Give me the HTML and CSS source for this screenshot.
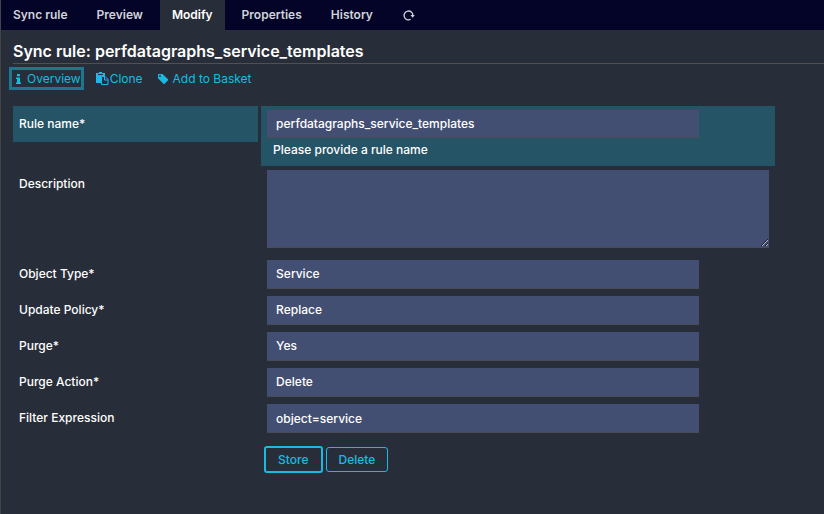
FILE: index.html
```html
<!DOCTYPE html>
<html lang="en">
<head>
<meta charset="utf-8">
<meta name="viewport" content="width=device-width, initial-scale=1">
<title>Sync rule: perfdatagraphs_service_templates</title>
<link rel="stylesheet" href="styles.css">
</head>
<body>
<nav class="tabs">
  <a class="tab" href="#">Sync rule</a>
  <a class="tab" href="#">Preview</a>
  <a class="tab active" href="#" aria-current="page">Modify</a>
  <a class="tab" href="#">Properties</a>
  <a class="tab" href="#">History</a>
  <a class="tab" href="#" aria-label="Reload"><svg class="reload" viewBox="0 0 13 13"><path d="M8.600 10.300A4.400 4.400 0 1 1 10.900 6.500" fill="none" stroke="currentColor" stroke-width="1.300"/><path d="M8.400 6h4.400L10.700 8.700z" fill="currentColor"/></svg></a>
</nav>
<main class="page">
  <h1 class="title">Sync rule: perfdatagraphs_service_templates</h1>
  <div class="actions">
    <a class="action focused" href="#"><svg class="icon" viewBox="0 0 12 12"><path d="M4 1h3v2.200h-3zM3 4.500h4V9.500h1V11h-5V9.500h1V6h-1z" fill="currentColor"/></svg>Overview</a>
    <a class="action clone" href="#"><svg class="icon wide" viewBox="0 0 13 13"><path d="M0 1h3V0h3v1h3v3H5v7H0z" fill="currentColor"/><path d="M2 2.500h5" stroke="#282e39"/><path d="M5.500 4.500h3.500l3 3v5h-6.500zM8.500 4.500v3.500h3.500" fill="#282e39" stroke="currentColor"/></svg>Clone</a>
    <a class="action basket" href="#"><svg class="icon" viewBox="0 0 12 12"><path d="M1 1.500Q1 1 1.500 1H5.500L11 6.300Q11.500 6.800 11 7.300L7.600 10.700Q7 11.200 6.500 10.700L1 5.300z" fill="currentColor"/><circle cx="3" cy="3" r="1" fill="#282e39"/></svg>Add to Basket</a>
  </div>
  <form class="form">
    <div class="row highlighted">
      <div class="name"><label for="rule-name">Rule name*</label></div>
      <div class="value"><input class="field" id="rule-name" type="text" value="perfdatagraphs_service_templates" aria-describedby="rule-hint"><p class="hint" id="rule-hint">Please provide a rule name</p></div>
    </div>
    <div class="row">
      <div class="name"><label for="description">Description</label></div>
      <div class="value"><textarea class="field area" id="description"></textarea></div>
    </div>
    <div class="row">
      <div class="name"><label for="type">Object Type*</label></div>
      <div class="value"><select class="field" id="type"><option>Service</option></select></div>
    </div>
    <div class="row">
      <div class="name"><label for="policy">Update Policy*</label></div>
      <div class="value"><select class="field" id="policy"><option>Replace</option></select></div>
    </div>
    <div class="row">
      <div class="name"><label for="purge">Purge*</label></div>
      <div class="value"><select class="field" id="purge"><option>Yes</option></select></div>
    </div>
    <div class="row">
      <div class="name"><label for="purge-action">Purge Action*</label></div>
      <div class="value"><select class="field" id="purge-action"><option>Delete</option></select></div>
    </div>
    <div class="row">
      <div class="name"><label for="filter">Filter Expression</label></div>
      <div class="value"><input class="field" id="filter" type="text" value="object=service"></div>
    </div>
    <div class="row">
      <div class="buttons">
        <button class="button primary" type="submit">Store</button>
        <button class="button" type="button">Delete</button>
      </div>
    </div>
  </form>
</main>
</body>
</html>
```
FILE: styles.css
```css
* {
  box-sizing: border-box;
}

body {
  margin: 0;
  min-height: 100vh;
  border-left: 1px solid #444;
  background: #282e39;
  color: #fff;
  font: 500 12px/18px Inter, "Liberation Sans", sans-serif;
}

a {
  color: inherit;
  text-decoration: none;
}

.tabs {
  display: flex;
  gap: 5px;
  height: 30px;
  background: #040428;
  color: #d0d3da;
  font-weight: 600;
}

.tab {
  display: flex;
  align-items: center;
  padding: 0 12px;
}

.tab.active {
  background: #282e39;
  color: #fff;
}

.reload {
  width: 13px;
  height: 13px;
}

.page {
  padding-left: 12px;
}

.title {
  margin: 0;
  padding: 10px 0 1px;
  border-bottom: 1px solid #505050;
  font-size: 16px;
  font-weight: 600;
  line-height: 22px;
}

.actions {
  display: flex;
  align-items: center;
  gap: 12px;
  margin: 3px 0 16px -4px;
  color: #19bbe3;
  font-weight: 400;
}

.action {
  display: flex;
  align-items: center;
  gap: 2px;
}

.action.focused {
  height: 23px;
  padding-left: 1px;
  border: 3px solid #20768f;
}

.action.clone {
  gap: 1px;
  padding-right: 2px;
}

.action.basket {
  gap: 4px;
}

.icon {
  width: 12px;
  height: 12px;
}

.icon.wide {
  width: 13px;
  height: 13px;
}

.form {
  width: 94%;
}

.row {
  display: grid;
  grid-template-columns: 245fr 514fr;
  column-gap: 3px;
  align-items: start;
}

.name {
  min-height: 36px;
  padding: 9px 6px;
}

.value {
  padding: 4px 6px 3px;
}

.highlighted .name,
.highlighted .value {
  background: #255466;
}

.field {
  display: block;
  appearance: none;
  width: 86%;
  height: 29px;
  margin: 0;
  padding: 0 9px;
  border: 0;
  border-bottom: 1px solid #4b4b55;
  border-radius: 0;
  outline: 0;
  background: #434f72;
  color: inherit;
  font: inherit;
}

.highlighted .field {
  height: 28px;
}

.field.area {
  width: 100%;
  height: 78px;
  margin-bottom: 5px;
  resize: both;
}

.hint {
  margin: 0;
  padding: 3px 6px 4px;
}

.buttons {
  grid-column: 2;
  display: flex;
  align-items: center;
  gap: 3px;
  padding: 10px 3px;
}

.button {
  height: 25px;
  padding: 0 12px;
  border: 1px solid #19bbe3;
  border-radius: 3px;
  background: transparent;
  color: #19bbe3;
  font: inherit;
}

.button.primary {
  height: 27px;
  border-width: 2px;
}
```
